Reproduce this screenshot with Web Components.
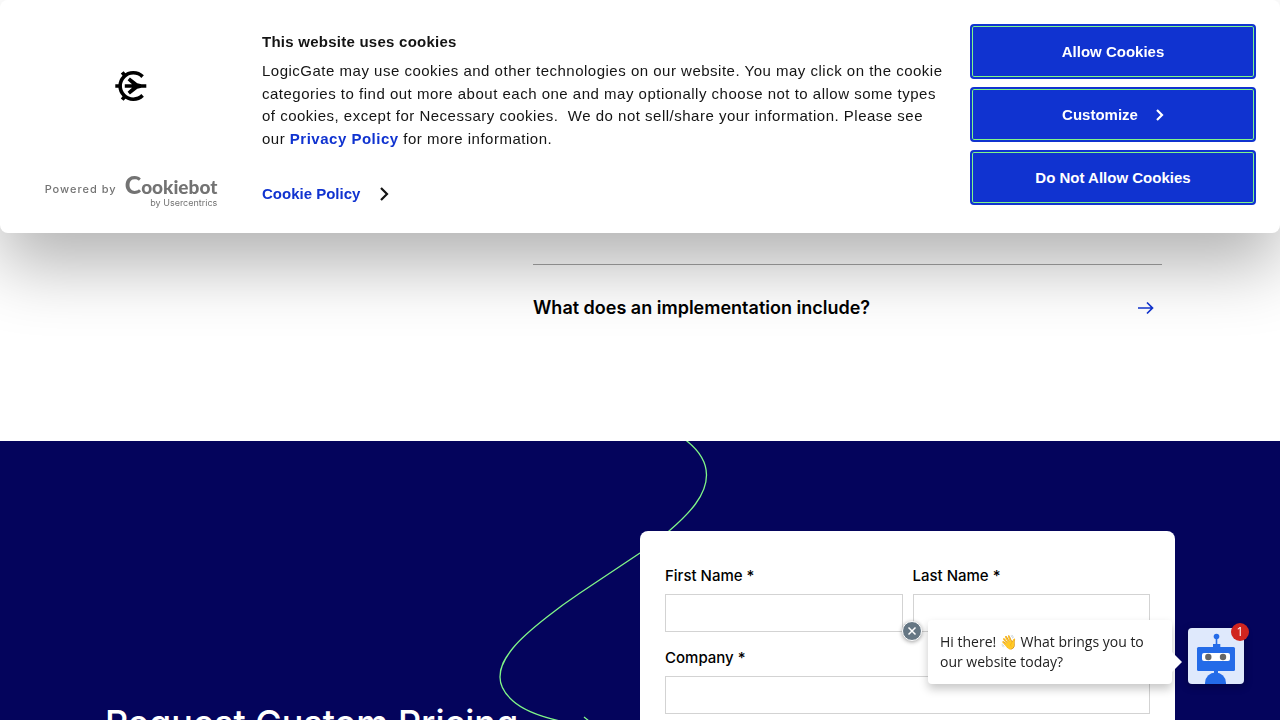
<!DOCTYPE html>
<html lang="en">
<head>
<meta charset="utf-8">
<meta name="viewport" content="width=device-width, initial-scale=1">
<title>LogicGate Pricing</title>
<style>
  :root { --blue: #1033d0; --navy: #04045c; --green: #80f688; }
  * { box-sizing: border-box; }
  body { margin: 0; background: #fff; font-family: Inter, "Liberation Sans", sans-serif; color: #000; }
</style>
</head>
<body>
<pricing-page></pricing-page>
<script>
const define = (name, html, setup) => customElements.define(name, class extends HTMLElement {
  constructor() {
    super();
    const t = document.createElement('template');
    t.innerHTML = '<style>*{box-sizing:border-box}</style>' + html;
    this.attachShadow({ mode: 'open' }).append(t.content.cloneNode(true));
  }
  connectedCallback() { if (setup) setup(this, this.shadowRoot); }
});

define('brand-mark', `
<style>:host{display:block;width:32px;height:32px} svg{display:block}</style>
<svg width="32" height="32" viewBox="0 0 32 32" role="img" aria-label="LogicGate">
  <path d="M27.6 6.6A13.2 13.2 0 1 0 27.6 25.4" fill="none" stroke="#000" stroke-width="3.6"/>
  <path d="M.3 16H5M7.2 2.4l3 3.6M7.2 29.6l3-3.6" fill="none" stroke="#000" stroke-width="3.6"/>
  <path d="M9.8 14.3h7.2l-4.4-4 2.3-2.7 7.4 5.6 4.2 1.1H31.300v3.400h-4.800l-4.200 1.100-7.400 5.600-2.300-2.700 4.400-4H9.800z" fill="#000"/>
</svg>`);

define('cookiebot-credit', `
<style>
  :host{display:block}
  a{display:flex;align-items:flex-start;gap:8px;color:#737373;text-decoration:none}
  .by{font-size:11px;line-height:14px;letter-spacing:1px;padding-top:8px;white-space:nowrap;font-weight:500}
  .mark{display:flex;flex-direction:column;align-items:flex-end;white-space:nowrap}
  .name{font:900 19px/20px Lato,sans-serif}
  .name span{font-size:25px}
  .owner{font-size:9px;line-height:11px}
</style>
<a href="#cookiebot"><span class="by">Powered by</span><span class="mark"><span class="name"><span>C</span>ookiebot</span><span class="owner">by Usercentrics</span></span></a>`);

define('cookie-button', `
<style>
  :host{display:block}
  button{display:flex;align-items:center;justify-content:center;gap:18px;width:100%;height:55px;margin:0;border:2px solid var(--blue);border-radius:4px;background:var(--blue);box-shadow:inset 0 0 0 1px var(--green);color:#fff;font:bold 15px/20px "Liberation Sans",Arial,sans-serif;cursor:pointer}
  svg{display:none}
  :host([more]) svg{display:block}
</style>
<button type="button"><slot></slot><svg width="8" height="12" viewBox="0 0 8 12" aria-hidden="true"><path d="M1 1l5 5-5 5" fill="none" stroke="#fff" stroke-width="2.2"/></svg></button>`);

define('cookie-banner', `
<style>
  :host{display:grid;grid-template-columns:214px minmax(0,1fr) 286px;column-gap:24px;padding:0 24px;background:#fff;border-radius:8px;box-shadow:0 32px 68px rgba(0,0,0,.3);font-family:"Liberation Sans",Arial,sans-serif;font-size:15px;color:#141414}
  .brand{display:flex;flex-direction:column;align-items:center;justify-content:space-between;padding:70px 0 25px}
  cookiebot-credit{font-family:Inter,sans-serif}
  .copy{padding:30px 0 28px}
  h2{margin:0 0 7px;font-size:15px;line-height:23px;letter-spacing:.25px}
  p{margin:0 0 33px;line-height:1.5;letter-spacing:.5px}
  a{color:var(--blue);font-weight:bold;text-decoration:none}
  .policy{display:inline-flex;align-items:center;gap:20px;line-height:22px}
  .actions{display:flex;flex-direction:column;gap:8px;padding:24px 0}
</style>
<div class="brand"><brand-mark></brand-mark><cookiebot-credit></cookiebot-credit></div>
<div class="copy">
  <h2>This website uses cookies</h2>
  <p>LogicGate may use cookies and other technologies on our website. You may click on the cookie categories to find out more about each one and may optionally choose not to allow some types of cookies, except for Necessary cookies.&nbsp; We do not sell/share your information. Please see our <a href="#privacy">Privacy Policy</a> for more information.</p>
  <a class="policy" href="#cookies">Cookie Policy<svg width="9" height="16" viewBox="0 0 9 16" aria-hidden="true"><path d="M1 2l6 6-6 6" fill="none" stroke="#141414" stroke-width="2.2"/></svg></a>
</div>
<div class="actions">
  <cookie-button>Allow Cookies</cookie-button>
  <cookie-button more>Customize</cookie-button>
  <cookie-button>Do Not Allow Cookies</cookie-button>
</div>`);

define('faq-item', `
<style>
  :host{display:block;border-top:1px solid #a5a5a5}
  button{display:flex;align-items:center;justify-content:space-between;width:100%;margin:0;padding:30px 8px 30px 0;border:0;background:none;color:#000;font:600 18px/26px Inter,sans-serif;text-align:left;cursor:pointer}
</style>
<button type="button" aria-expanded="false"><slot></slot><svg width="17" height="14" viewBox="0 0 17 14" aria-hidden="true"><path d="M1 7h14.500M10 1.500L15.500 7 10 12.500" fill="none" stroke="#1033d0" stroke-width="1.700"/></svg></button>`);

define('faq-section', `
<style>
  :host{display:block;padding:264px 24px 90px}
  .inner{max-width:1044px;margin:0 auto;display:grid;grid-template-columns:415px minmax(0,1fr)}
  faq-item{grid-column:2}
</style>
<div class="inner"><faq-item>What does an implementation include?</faq-item></div>`);

define('form-field', `
<style>
  :host{display:block}
  label{display:block;margin-bottom:8px;font-weight:500;font-size:15px;line-height:20px}
  input{display:block;width:100%;height:38px;margin:0;padding:0 10px;border:1px solid #d3d3d3;border-radius:0;background:#fff;font:15px Inter,sans-serif}
</style>
<label for="f"></label><input id="f" type="text" required>`,
(el, root) => { root.querySelector('label').textContent = el.getAttribute('label') + ' *'; });

define('quote-form', `
<style>
  :host{display:block;background:#fff;border-radius:8px;padding:35px 25px 40px}
  form{display:grid;grid-template-columns:1fr 1fr;gap:16px 10px}
  .wide{grid-column:1/-1}
</style>
<form>
  <form-field label="First Name"></form-field>
  <form-field label="Last Name"></form-field>
  <form-field class="wide" label="Company"></form-field>
</form>`);

define('request-section', `
<style>
  :host{display:block;position:relative;flex:1;padding:90px 24px 0;background:var(--navy)}
  .inner{position:relative;max-width:1070px;margin:0 auto;display:grid;grid-template-columns:1fr 1fr}
  h2{margin:0;padding-top:168px;color:#fff;font-weight:500;font-size:36px;line-height:48px}
  .thread{position:absolute;top:0;left:calc(50% - 150px)}
</style>
<svg class="thread" width="230" height="290" viewBox="490 441 230 290" aria-hidden="true">
  <path d="M680 436C698 448 706.500 461 706.500 475C706.500 495 690 513 669 531C660 539 651 545 640 553L580 593C568 601 557 609 547 617C533 628 521 638 513 648C504 659 500 667 500 677C500 687 505 694 513 701C523 710 538 716 560 721C575 725 600 730 615 737M584 717L589 721" fill="none" stroke="#80f688" stroke-width="1.300"/>
</svg>
<div class="inner"><h2>Request Custom Pricing</h2><quote-form></quote-form></div>`);

define('chat-widget', `
<style>
  :host{display:flex;align-items:flex-end;gap:16px;font-family:"Open Sans","Noto Sans",sans-serif}
  .bubble{position:relative;width:244px;padding:12px;background:#fff;border-radius:4px;box-shadow:0 5px 10px rgba(0,0,0,.22);color:#222;font-size:14px;line-height:20px}
  .bubble::after{content:"";position:absolute;left:100%;bottom:12px;border:10px solid transparent;border-left-color:#fff;border-right:0}
  p{margin:0}
  button{margin:0;padding:0;border:0;cursor:pointer}
  .close{position:absolute;left:-26px;top:1px;width:20px;height:20px;border:1px solid #fff;border-radius:50%;background:#667784;box-shadow:0 1px 4px rgba(0,0,0,.4);display:grid;place-items:center}
  .bot{position:relative;width:56px;height:56px;border-radius:4px;background:#dfe9fc;box-shadow:0 2px 8px rgba(0,0,0,.3)}
  .bot svg{display:block}
  .badge{position:absolute;right:-5px;top:-5px;width:18px;height:18px;border-radius:50%;background:#d0251f;color:#fff;font:12px/18px "Open Sans",sans-serif;text-align:center}
</style>
<div class="bubble">
  <p>Hi there! 👋 What brings you to our website today?</p>
  <button class="close" type="button" aria-label="Close message"><svg width="10" height="10" viewBox="0 0 10 10"><path d="M1.500 1.500l7 7M8.500 1.500l-7 7" stroke="#fff" stroke-width="1.500"/></svg></button>
</div>
<button class="bot" type="button" aria-label="Open chat">
  <svg width="56" height="56" viewBox="0 0 56 56" fill="#246be8">
    <circle cx="28.500" cy="8.500" r="2.800"/><path d="M27.700 10h1.600v7h-1.600zM25 16h7.300v4H25z"/>
    <rect x="9" y="19" width="38" height="24" rx="1.500"/>
    <rect x="14" y="25" width="28" height="8" rx="2" fill="#fff"/>
    <circle cx="20.300" cy="29" r="3.200" fill="#666"/><circle cx="35" cy="29" r="3.200" fill="#666"/>
    <path d="M26 42h4v4h-4z"/><path d="M17 56v-1a10.500 10.500 0 0 1 21 0v1z"/>
  </svg>
  <span class="badge">1</span>
</button>`);

define('pricing-page', `
<style>
  :host{display:flex;flex-direction:column;height:100vh;overflow:hidden}
  cookie-banner{position:fixed;top:0;left:0;right:0}
  chat-widget{position:fixed;right:36px;bottom:36px}
</style>
<faq-section></faq-section>
<request-section></request-section>
<cookie-banner></cookie-banner>
<chat-widget></chat-widget>`);
</script>
</body>
</html>
